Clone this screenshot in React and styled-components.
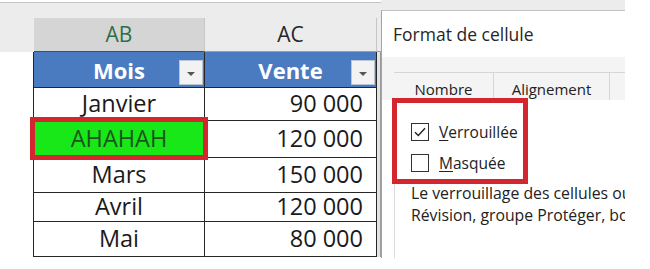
import React from 'react'
import styled, { createGlobalStyle } from 'styled-components'

const COLS = '34px 171px 172px 4px'

const GlobalStyle = createGlobalStyle`
  *, *::before, *::after {
    box-sizing: border-box;
  }

  html,
  body {
    margin: 0;
    padding: 0;
    background: #fff;
  }

  body {
    font-family: 'Open Sans', 'Noto Sans', sans-serif;
  }
`

const Frame = styled.div`
  width: 650px;
  height: 269px;
  background: #fff;
  overflow: hidden;
`

const Shot = styled.div`
  display: flex;
  width: 625px;
  height: 258px;
  overflow: hidden;
`

const Sheet = styled.div`
  position: relative;
  width: 381px;
  flex-shrink: 0;
  display: flex;
  flex-direction: column;
`

const HeaderBand = styled.div`
  height: 50px;
  margin-top: 2px;
  border-top: 1px solid #c4c4c4;
  background: #ececec;
  display: grid;
  grid-template-columns: ${COLS};
  align-items: end;
`

const ColHead = styled.div`
  height: 34px;
  display: flex;
  align-items: center;
  justify-content: center;
  font-size: 21px;
  line-height: 1;
  color: ${props => (props.selected ? '#2f6f44' : '#262626')};
  background: ${props => (props.selected ? '#d5d5d5' : 'transparent')};
  border-right: 1px solid #c6c6c6;
  border-bottom: 1px solid ${props => (props.selected ? '#2b5f3a' : '#9c9c9c')};
`

const BandEdge = styled.div`
  height: 34px;
  border-bottom: 1px solid #9c9c9c;
`

const Row = styled.div`
  display: grid;
  grid-template-columns: ${COLS};
  grid-template-rows: ${props => props.h}px;
  height: ${props => props.h}px;
  flex-shrink: 0;
`

const Gutter = styled.div`
  background: #fff;
  border-right: 1px solid #262626;
`

const Cell = styled.div`
  display: flex;
  align-items: center;
  justify-content: ${props => (props.right ? 'flex-end' : 'center')};
  padding-right: ${props => (props.right ? '13px' : '0')};
  font-size: 23.5px;
  line-height: 1.1;
  color: ${props => (props.green ? '#1b561b' : '#1a1a1a')};
  background: ${props => (props.green ? '#18e818' : '#fff')};
  border-right: 1px solid #262626;
  border-bottom: 1px solid #262626;
`

const HeadCell = styled.div`
  position: relative;
  display: flex;
  align-items: center;
  justify-content: center;
  font-size: 22px;
  font-weight: 700;
  line-height: 1;
  color: #fff;
  background: #4a7bc1;
  border-right: 1px solid #262626;
  border-bottom: 1px solid #262626;
`

const DropBtn = styled.div`
  position: absolute;
  right: 1px;
  top: 8px;
  width: 24px;
  height: 25px;
  background: #f2f2f2;
  border: 1px solid #b9c6d8;
  display: flex;
  align-items: center;
  justify-content: center;
  padding-top: 2px;

  &::after {
    content: '';
    border-left: 4px solid transparent;
    border-right: 4px solid transparent;
    border-top: 4px solid #555;
  }
`

const Stripe = styled.div`
  background: #e4e4e4;
  border-right: 1px solid #9a9a9a;
`

const Highlight = styled.div`
  position: absolute;
  left: 30px;
  top: 117px;
  width: 178px;
  height: 43px;
  border: 5px solid #d3262f;
  pointer-events: none;
`

const Dialog = styled.div`
  position: relative;
  flex: 1;
  display: flex;
  flex-direction: column;
  background: #ececec;
  padding-top: 10px;
`

const DialogBody = styled.div`
  flex: 1;
  display: flex;
  flex-direction: column;
  background: #fff;
  border-top: 1px solid #c2c2c2;
  border-left: 1px solid #a4a4a4;
`

const Title = styled.div`
  height: 46px;
  display: flex;
  align-items: center;
  padding-left: 11px;
  font-size: 17.5px;
  color: #262626;
  white-space: nowrap;
`

const TabArea = styled.div`
  background: #f4f4f4;
  padding: 15px 0 0 12px;
`

const TabStrip = styled.div`
  display: flex;
  height: 28px;
  border-top: 1px solid #d6d6d6;
`

const Tab = styled.div`
  flex-shrink: 0;
  width: ${props => props.w}px;
  display: flex;
  align-items: flex-end;
  justify-content: center;
  padding-bottom: 1px;
  font-size: 15px;
  color: #222;
  border-right: 1px solid #d6d6d6;
  white-space: nowrap;
`

const Panel = styled.div`
  flex: 1;
  margin-left: 12px;
  border-left: 1px solid #dcdcdc;
  padding: 23px 0 0 16px;
`

const CheckRow = styled.div`
  display: flex;
  align-items: center;
  gap: 10px;
  height: 17px;
  margin-bottom: 14px;
  font-size: 15.5px;
  color: #222;
  white-space: nowrap;

  u {
    text-underline-offset: 2px;
  }
`

const Box = styled.div`
  width: 18px;
  height: 18px;
  border: 1px solid #333;
  background: #fff;
  display: flex;
  align-items: center;
  justify-content: center;
  flex-shrink: 0;
`

const Note = styled.div`
  margin-top: -3px;
  font-size: 15.8px;
  line-height: 22px;
  color: #222;
  white-space: nowrap;
`

const Outline = styled.div`
  position: absolute;
  left: 11px;
  top: 98px;
  width: 136px;
  height: 86px;
  border: 5px solid #d3262f;
  pointer-events: none;
`

const rows = [
  { mois: 'Janvier', vente: '90 000', h: 33 },
  { mois: 'AHAHAH', vente: '120 000', h: 37, green: true },
  { mois: 'Mars', vente: '150 000', h: 35 },
  { mois: 'Avril', vente: '120 000', h: 29 },
  { mois: 'Mai', vente: '80 000', h: 35 },
]

const Check = ({ checked }) => (
  <Box>
    {checked && (
      <svg width="14" height="14" viewBox="0 0 14 14">
        <path d="M2 7.2 L5.3 10.5 L12 3.2" fill="none" stroke="#222" strokeWidth="1.4" />
      </svg>
    )}
  </Box>
)

export default function App() {
  return (
    <Frame>
      <GlobalStyle />
      <Shot>
        <Sheet>
          <HeaderBand>
            <div />
            <ColHead selected>AB</ColHead>
            <ColHead>AC</ColHead>
            <BandEdge />
          </HeaderBand>
          <Row h={36}>
            <Gutter />
            <HeadCell>
              Mois
              <DropBtn />
            </HeadCell>
            <HeadCell>
              Vente
              <DropBtn />
            </HeadCell>
            <Stripe />
          </Row>
          {rows.map(r => (
            <Row key={r.mois} h={r.h}>
              <Gutter />
              <Cell green={r.green}>{r.mois}</Cell>
              <Cell right>{r.vente}</Cell>
              <Stripe />
            </Row>
          ))}
          <Highlight />
        </Sheet>
        <Dialog>
          <DialogBody>
            <Title>Format de cellule</Title>
            <TabArea>
              <TabStrip>
                <Tab w={100}>Nombre</Tab>
                <Tab w={116}>Alignement</Tab>
                <Tab w={80} />
              </TabStrip>
            </TabArea>
            <Panel>
              <CheckRow>
                <Check checked />
                <span>
                  <u>V</u>errouillée
                </span>
              </CheckRow>
              <CheckRow>
                <Check />
                <span>
                  <u>M</u>asquée
                </span>
              </CheckRow>
              <Note>
                Le verrouillage des cellules ou le masquage des formules n'a aucun effet tant que la
                feuille n'est pas protégée (onglet
                <br />
                Révision, groupe Protéger, bouton Protéger la feuille).
              </Note>
            </Panel>
          </DialogBody>
          <Outline />
        </Dialog>
      </Shot>
    </Frame>
  )
}
